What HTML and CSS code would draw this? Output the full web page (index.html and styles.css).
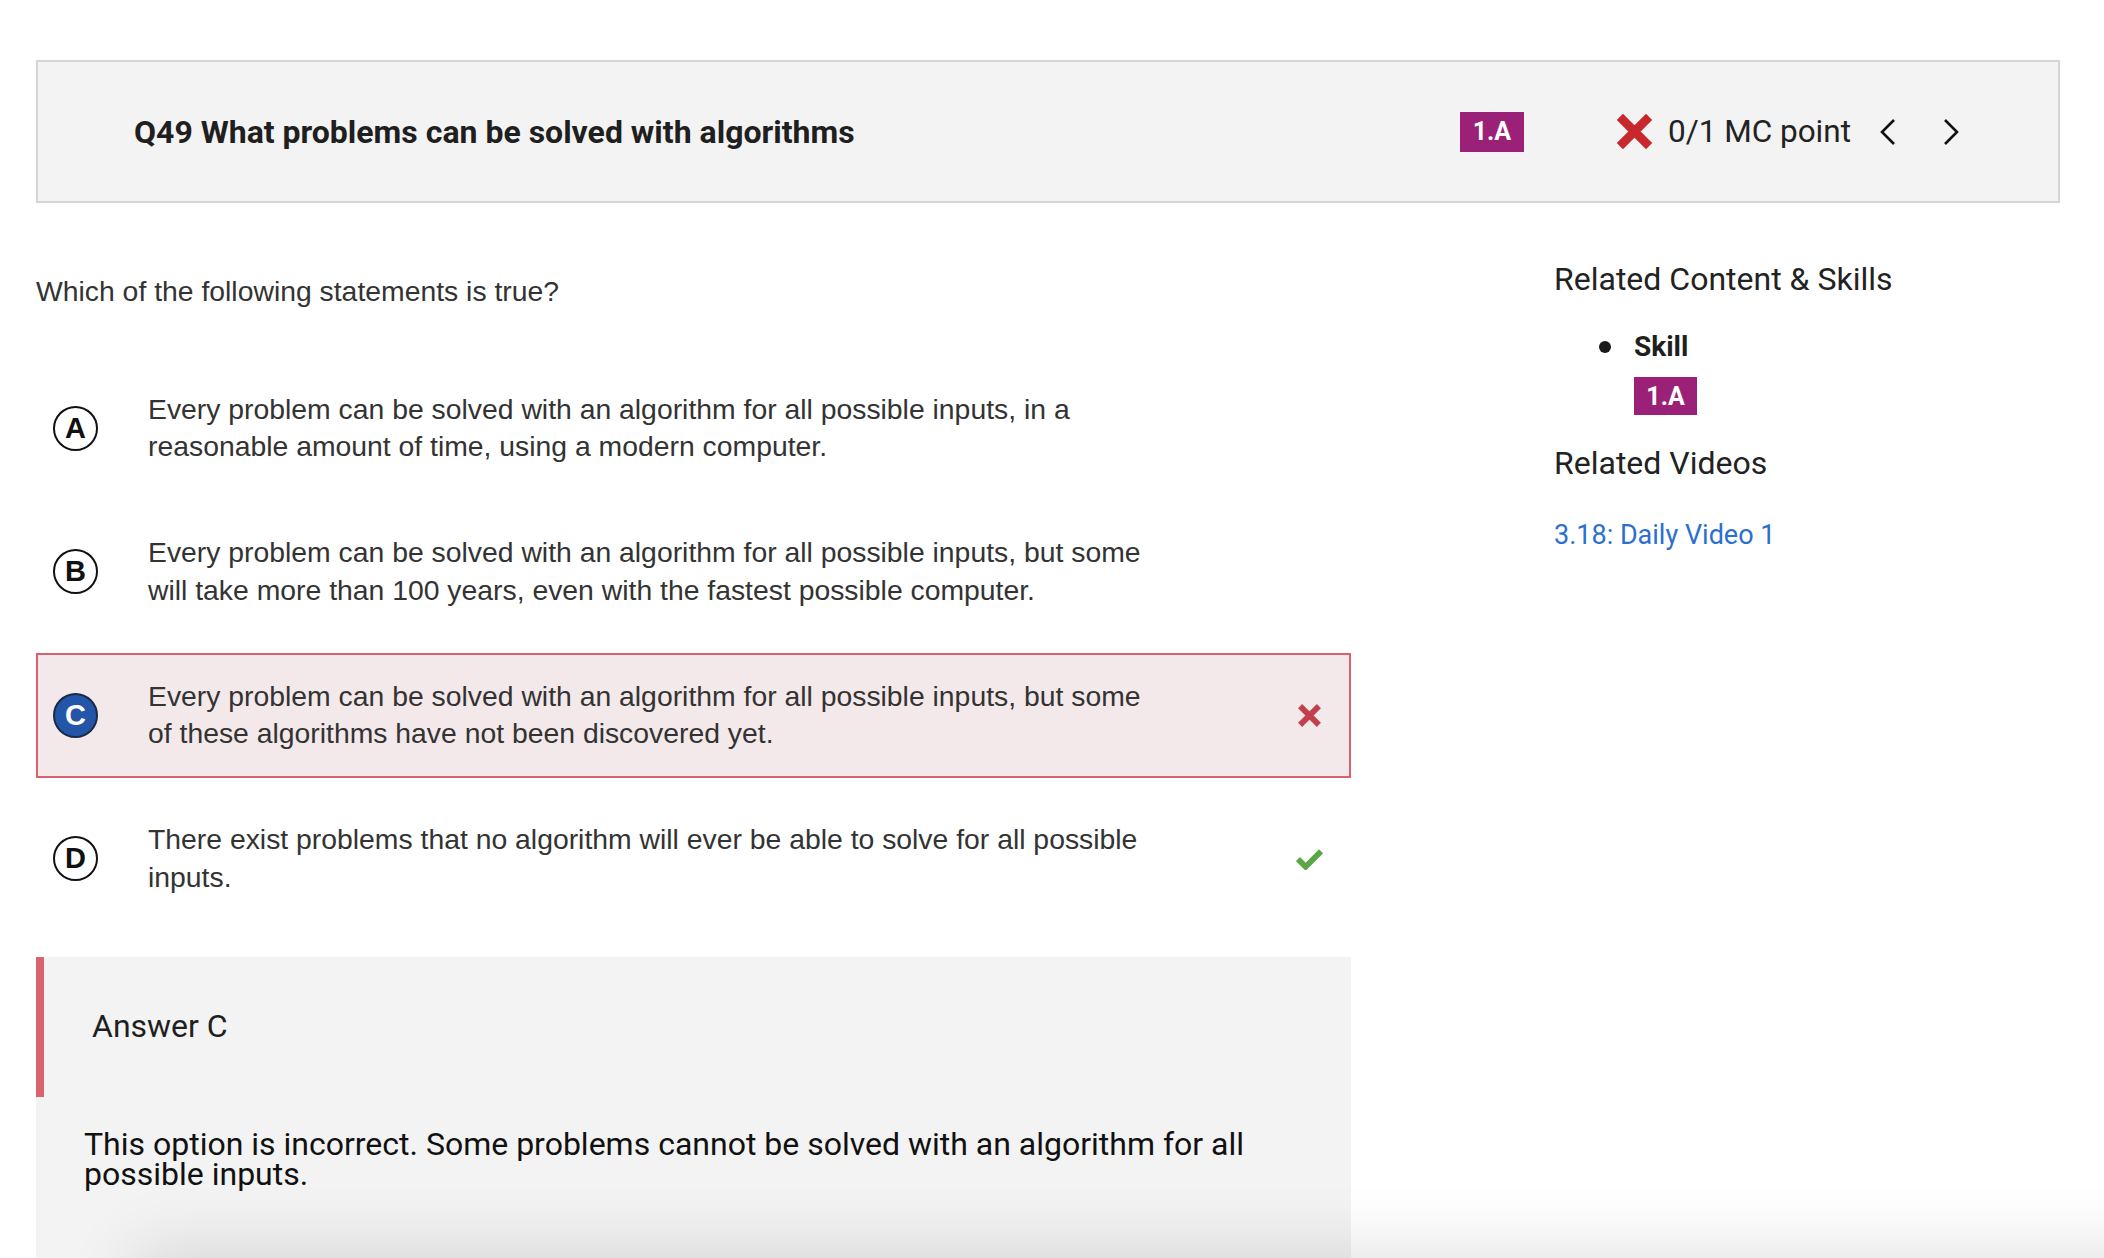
FILE: index.html
```html
<!DOCTYPE html>
<html lang="en">
<head>
<meta charset="utf-8">
<title>Q49 What problems can be solved with algorithms</title>
<link rel="stylesheet" href="styles.css">
</head>
<body>
<div class="page">
  <header class="qhead">
    <h1 class="qtitle">Q49 What problems can be solved with algorithms</h1>
    <span class="badge badge-head">1.A</span>
    <svg class="score-x" viewBox="0 0 40 40" aria-hidden="true">
      <path d="M5 5 L35 35 M35 5 L5 35" stroke="#c8282c" stroke-width="9" stroke-linecap="butt" fill="none"/>
    </svg>
    <span class="score">0/1 MC point</span>
    <svg class="chev chev-prev" viewBox="0 0 16 28" aria-hidden="true">
      <polyline points="14,2 2,14 14,26" fill="none" stroke="#111" stroke-width="2.6"/>
    </svg>
    <svg class="chev chev-next" viewBox="0 0 16 28" aria-hidden="true">
      <polyline points="2,2 14,14 2,26" fill="none" stroke="#111" stroke-width="2.6"/>
    </svg>
  </header>

  <div class="content">
    <main class="main">
      <p class="prompt">Which of the following statements is true?</p>
      <ol class="options">
        <li class="option">
          <span class="letter">A</span>
          <span class="otext">Every problem can be solved with an algorithm for all possible inputs, in a reasonable amount of time, using a modern computer.</span>
          <span class="mark"></span>
        </li>
        <li class="option">
          <span class="letter">B</span>
          <span class="otext">Every problem can be solved with an algorithm for all possible inputs, but some will take more than 100 years, even with the fastest possible computer.</span>
          <span class="mark"></span>
        </li>
        <li class="option option-wrong">
          <span class="letter letter-picked">C</span>
          <span class="otext">Every problem can be solved with an algorithm for all possible inputs, but some of these algorithms have not been discovered yet.</span>
          <span class="mark">
            <svg class="mark-x" viewBox="0 0 24 24" aria-hidden="true"><path d="M3 3 L21 21 M21 3 L3 21" stroke="#c2404c" stroke-width="5.5" fill="none"/></svg>
          </span>
        </li>
        <li class="option">
          <span class="letter">D</span>
          <span class="otext">There exist problems that no algorithm will ever be able to solve for all possible inputs.</span>
          <span class="mark">
            <svg class="mark-check" viewBox="0 0 28 22" aria-hidden="true"><polyline points="2,11 10,19 26,3" stroke="#5ba646" stroke-width="6" fill="none"/></svg>
          </span>
        </li>
      </ol>

      <section class="answer">
        <div class="answer-head">Answer C</div>
        <p class="answer-body">This option is incorrect. Some problems cannot be solved with an algorithm for all possible inputs.</p>
      </section>
    </main>

    <aside class="side">
      <h2 class="side-title">Related Content &amp; Skills</h2>
      <ul class="skills">
        <li class="skill">
          <span class="skill-label">Skill</span>
          <span class="badge badge-side">1.A</span>
        </li>
      </ul>
      <h2 class="side-title side-title-videos">Related Videos</h2>
      <a class="video-link" href="#">3.18: Daily Video 1</a>
    </aside>
  </div>
</div>
<div class="dock-shadow"></div>
</body>
</html>
```

FILE: styles.css
```css
html, body {
  margin: 0;
  padding: 0;
  background: #ffffff;
}

body {
  font-family: "Roboto", "Liberation Sans", sans-serif;
  color: #222;
  overflow: hidden;
  height: 1258px;
}

.page {
  padding: 60px 44px 0 36px;
}

/* ---------- header ---------- */
.qhead {
  display: flex;
  align-items: center;
  height: 139px;
  background: #f3f3f3;
  border: 2px solid #d5d5d9;
  padding: 0 99px 0 96px;
}

.qtitle {
  flex: 1;
  margin: 0;
  font-size: 32px;
  font-weight: 700;
  color: #1f1f1f;
}

.badge {
  display: inline-flex;
  align-items: center;
  justify-content: center;
  background: #9b2178;
  color: #fff;
  font-family: "Roboto", sans-serif;
  font-weight: 700;
  font-size: 25px;
}

.badge-head {
  width: 64px;
  height: 40px;
  margin-right: 91px;
}

.score-x {
  width: 39px;
  height: 39px;
  margin-right: 14px;
}

.score {
  font-size: 31.5px;
  color: #222;
  margin-right: 29px;
}

.chev {
  width: 16px;
  height: 28px;
}

.chev-prev {
  margin-right: 47px;
}

/* ---------- content ---------- */
.content {
  display: grid;
  grid-template-columns: 1315px 1fr;
  column-gap: 203px;
}

.prompt {
  margin: 70px 0 0;
  font-family: "Liberation Sans", Arial, sans-serif;
  font-size: 28.35px;
  line-height: 37.5px;
  color: #333;
}

.options {
  list-style: none;
  margin: 55px 0 0;
  padding: 0;
  display: flex;
  flex-direction: column;
  gap: 18.5px;
}

.option {
  display: flex;
  align-items: center;
  height: 125px;
  box-sizing: border-box;
  border: 2px solid transparent;
  padding: 0 26px 0 15px;
}

.option-wrong {
  border-color: #d8616d;
  background: #f4e9ea;
}

.letter {
  flex: none;
  width: 45px;
  height: 45px;
  box-sizing: border-box;
  border: 2.5px solid #111;
  border-radius: 50%;
  display: flex;
  align-items: center;
  justify-content: center;
  font-family: "Liberation Sans", Arial, sans-serif;
  font-weight: 700;
  font-size: 29px;
  color: #111;
  margin-right: 50px;
}

.letter-picked {
  background: #2356a8;
  border-color: #1b2a45;
  color: #fff;
}

.otext {
  width: 1005px;
  font-family: "Liberation Sans", Arial, sans-serif;
  font-size: 28.35px;
  line-height: 37.5px;
  color: #333;
}

.mark {
  flex: none;
  margin-left: auto;
  width: 28px;
  height: 28px;
  display: flex;
  align-items: center;
  justify-content: center;
}

.mark-x {
  width: 25px;
  height: 25px;
}

.mark-check {
  width: 27px;
  height: 22px;
}

/* ---------- answer ---------- */
.answer {
  margin-top: 36px;
  background: #f3f3f3;
  padding-bottom: 200px;
}

.answer-head {
  height: 140px;
  display: flex;
  align-items: center;
  border-left: 8px solid #d8636e;
  padding-left: 48px;
  padding-bottom: 3px;
  box-sizing: border-box;
  font-size: 32px;
  color: #1f1f1f;
}

.answer-body {
  margin: 0;
  padding: 32px 48px 0;
  font-size: 32px;
  line-height: 30px;
  color: #111;
}

/* ---------- sidebar ---------- */
.side-title {
  margin: 57px 0 0;
  font-size: 32px;
  font-weight: 400;
  line-height: 38px;
  color: #222;
}

.skills {
  margin: 31px 0 0;
  padding-left: 80px;
  list-style: none;
  font-size: 28px;
}

.skill {
  position: relative;
}

.skill::before {
  content: "";
  position: absolute;
  left: -35px;
  top: 12px;
  width: 12px;
  height: 12px;
  border-radius: 50%;
  background: #1a1a1a;
}

.skill-label {
  display: block;
  font-weight: 700;
  line-height: 36px;
  color: #1f1f1f;
}

.badge-side {
  width: 63px;
  height: 38px;
  margin-top: 12px;
}

.side-title-videos {
  margin-top: 29px;
}

.video-link {
  display: block;
  margin-top: 35px;
  font-size: 27px;
  line-height: 36px;
  color: #2b6fcf;
  text-decoration: none;
}

/* ---------- bottom dock shadow (overlay) ---------- */
.dock-shadow {
  position: fixed;
  left: 140px;
  right: -120px;
  bottom: -100px;
  height: 100px;
  box-shadow: 0 0 70px 6px rgba(0, 0, 0, 0.13);
  background: #fff;
}
```
